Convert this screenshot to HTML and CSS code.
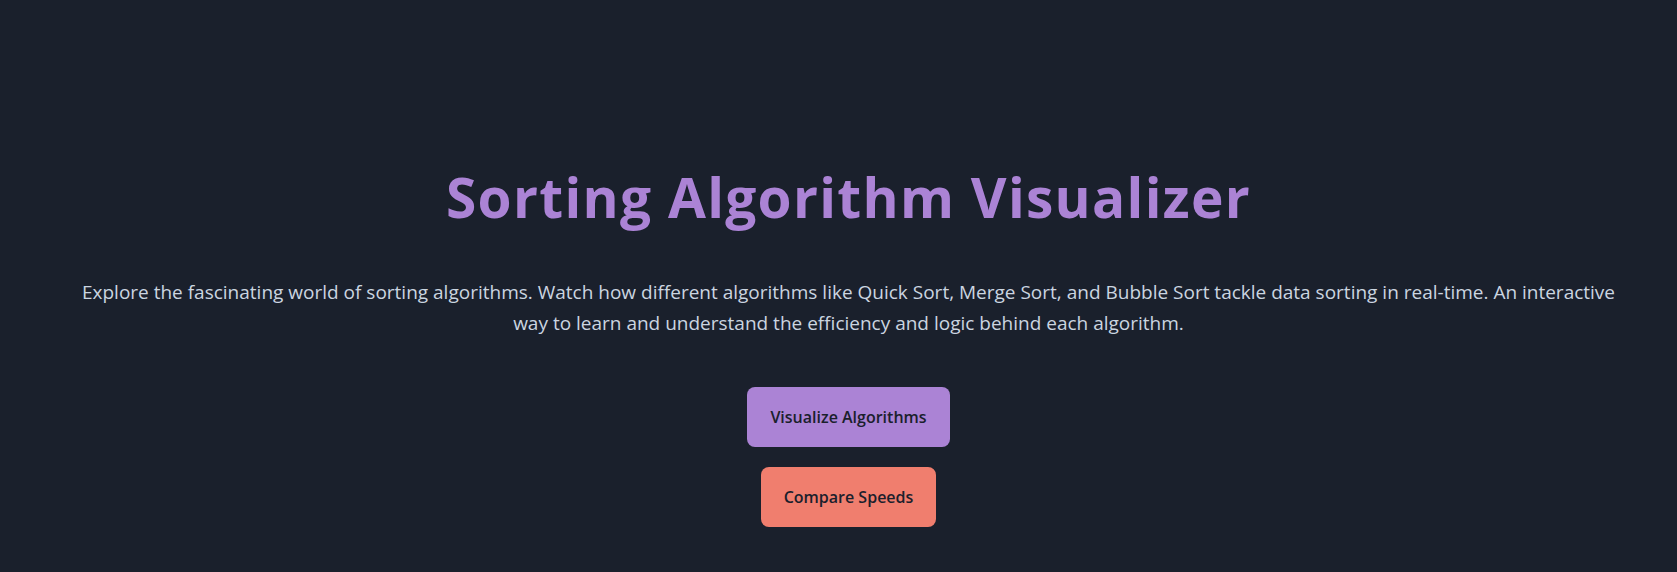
FILE: index.html
```html
<!DOCTYPE html>
<html lang="en">
<head>
<meta charset="utf-8">
<title>Sorting Algorithm Visualizer</title>
<link rel="stylesheet" href="styles.css">
</head>
<body>
<main class="hero">
  <h1 class="hero-title">Sorting Algorithm Visualizer</h1>
  <p class="hero-text">Explore the fascinating world of sorting algorithms. Watch how different algorithms like Quick Sort, Merge Sort, and Bubble Sort tackle data sorting in real-time. An interactive way to learn and understand the efficiency and logic behind each algorithm.</p>
  <div class="hero-actions">
    <a class="btn btn-primary" href="#">Visualize Algorithms</a>
    <a class="btn btn-secondary" href="#">Compare Speeds</a>
  </div>
</main>
</body>
</html>
```

FILE: styles.css
```css
html, body {
  margin: 0;
  padding: 0;
  background: #1a202c;
}

body {
  font-family: "Open Sans", "Noto Sans", sans-serif;
  color: #cbd5e0;
}

.hero {
  box-sizing: border-box;
  min-height: 572px;
  padding: 173px 0 0 20px;
  display: flex;
  flex-direction: column;
  align-items: center;
  text-align: center;
}

.hero-title {
  margin: 0;
  font-size: 55px;
  line-height: 48px;
  font-weight: 700;
  color: #ab83d5;
  letter-spacing: 1.3px;
}

.hero-text {
  margin: 56px 0 0;
  max-width: 1560px;
  font-size: 19px;
  line-height: 31px;
  color: #cbd5e0;
}

.hero-actions {
  margin-top: 48px;
  display: flex;
  flex-direction: column;
  align-items: center;
  gap: 20px;
}

.btn {
  display: block;
  height: 60px;
  box-sizing: border-box;
  padding: 18px 23px;
  line-height: 24px;
  font-size: 16px;
  font-weight: 600;
  color: #1a202c;
  text-decoration: none;
  border-radius: 8px;
}

.btn-primary {
  background: #ab83d5;
}

.btn-secondary {
  background: #f07e6e;
}
```
